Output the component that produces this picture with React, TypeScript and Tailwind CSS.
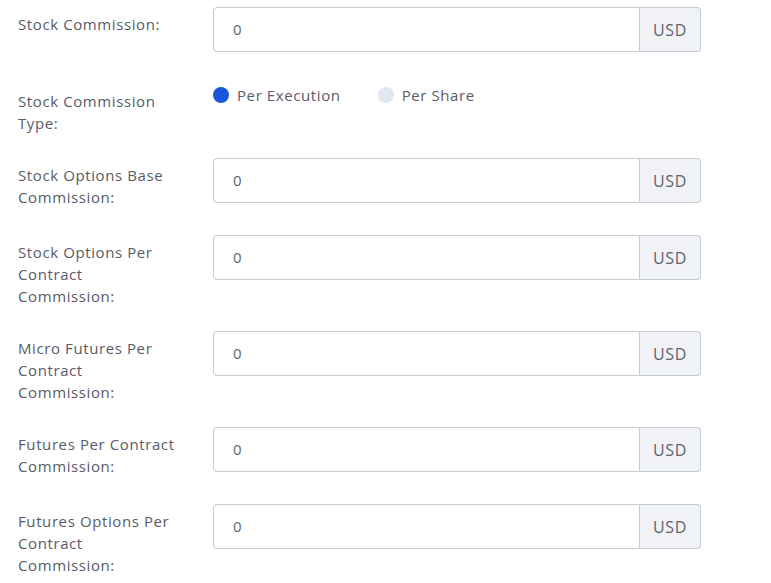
const rows: { label: string; kind: "input" | "radio" }[] = [
  { label: "Stock Commission:", kind: "input" },
  { label: "Stock Commission Type:", kind: "radio" },
  { label: "Stock Options Base Commission:", kind: "input" },
  { label: "Stock Options Per Contract Commission:", kind: "input" },
  { label: "Micro Futures Per Contract Commission:", kind: "input" },
  { label: "Futures Per Contract Commission:", kind: "input" },
  { label: "Futures Options Per Contract Commission:", kind: "input" },
];

function MoneyInput() {
  return (
    <div className="flex h-[45px] w-[488px] mb-[32px]">
      <input
        defaultValue="0"
        className="flex-1 min-w-0 border border-[#c3cbd6] rounded-l-[4px] px-[19px] text-[15px] text-[#5f6370] bg-white outline-none"
      />
      <span className="w-[61px] flex items-center justify-center border border-l-0 border-[#c3cbd6] rounded-r-[4px] bg-[#f0f2f5] text-[16px] text-[#5f6370]">
        USD
      </span>
    </div>
  );
}

function RadioGroup() {
  return (
    <div className="flex items-start gap-[37px] h-[74px]">
      <label className="flex items-center gap-[8px]">
        <span className="w-[16px] h-[16px] rounded-full bg-[#1a56db]" />
        <span>Per Execution</span>
      </label>
      <label className="flex items-center gap-[8px]">
        <span className="w-[16px] h-[16px] rounded-full bg-[#e1e7ef]" />
        <span>Per Share</span>
      </label>
    </div>
  );
}

export default function App() {
  return (
    <div
      className="bg-white min-h-screen pt-[7px] pl-[18px] text-[15px] tracking-[0.6px] text-[#585b67]"
      style={{ fontFamily: '"Open Sans", sans-serif' }}
    >
      {rows.map((row) => (
        <div key={row.label} className="flex items-start">
          <div className="w-[162px] pt-[6px] pb-[24px] leading-[22px] mr-[33px]">
            {row.label}
          </div>
          {row.kind === "input" ? <MoneyInput /> : <RadioGroup />}
        </div>
      ))}
    </div>
  );
}
